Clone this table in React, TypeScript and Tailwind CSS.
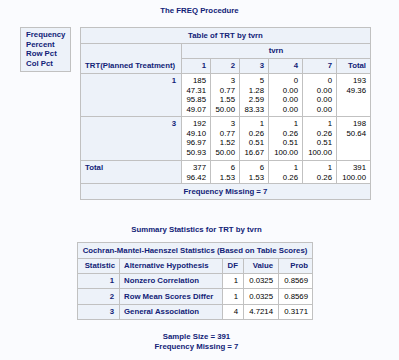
import { Fragment } from "react";

const hdr = "bg-[#edf2f9] text-[#112277] font-bold";
const cell = "bg-white text-black";

const rows = [
  {
    label: "1",
    cols: [
      ["185", "47.31", "95.85", "49.07"],
      ["3", "0.77", "1.55", "50.00"],
      ["5", "1.28", "2.59", "83.33"],
      ["0", "0.00", "0.00", "0.00"],
      ["0", "0.00", "0.00", "0.00"],
      ["193", "49.36"],
    ],
  },
  {
    label: "3",
    cols: [
      ["192", "49.10", "96.97", "50.93"],
      ["3", "0.77", "1.52", "50.00"],
      ["1", "0.26", "0.51", "16.67"],
      ["1", "0.26", "0.51", "100.00"],
      ["1", "0.26", "0.51", "100.00"],
      ["198", "50.64"],
    ],
  },
  {
    label: "Total",
    cols: [
      ["377", "96.42"],
      ["6", "1.53"],
      ["6", "1.53"],
      ["1", "0.26"],
      ["1", "0.26"],
      ["391", "100.00"],
    ],
  },
];

const cmh = [
  ["1", "Nonzero Correlation", "1", "0.0325", "0.8569"],
  ["2", "Row Mean Scores Differ", "1", "0.0325", "0.8569"],
  ["3", "General Association", "4", "4.7214", "0.3171"],
];

export default function App() {
  return (
    <div
      className="w-[399px] h-[360px] bg-[#fafbfe] text-[7.8px] leading-[10px] overflow-hidden"
      style={{ fontFamily: '"Liberation Sans", Arial, sans-serif' }}
    >
      <div className="pt-[6px] text-center font-bold text-[#112277]">The FREQ Procedure</div>

      <div className="mt-[11px] ml-[20px] flex items-start gap-[9px]">
        <div className="w-[51px] h-[45px] border border-[#c1c1c1] bg-[#edf2f9] text-[#112277] font-bold pl-[5px] pt-[2px] leading-[9.6px]">
          <div>Frequency</div>
          <div>Percent</div>
          <div>Row Pct</div>
          <div>Col Pct</div>
        </div>

        <div className="grid w-max grid-cols-[100px_28px_28px_28px_33px_33px_33px] grid-rows-[15px_14px_14px_42px_43px_22px_15px] gap-px bg-[#c1c1c1] p-px">
          <div className={`${hdr} col-span-7 flex items-center justify-center`}>Table of TRT by tvrn</div>
          <div className={`${hdr} row-span-2 flex items-end pl-[4px] pb-[2px]`}>TRT(Planned Treatment)</div>
          <div className={`${hdr} col-span-6 flex items-center justify-center`}>tvrn</div>
          {["1", "2", "3", "4", "7", "Total"].map((h) => (
            <div key={h} className={`${hdr} flex items-center justify-end pr-[4px]`}>
              {h}
            </div>
          ))}
          {rows.map((r) => (
            <Fragment key={r.label}>
              <div className={`${hdr} pt-[2px] ${r.label === "Total" ? "pl-[4px]" : "text-right pr-[5px]"}`}>
                {r.label}
              </div>
              {r.cols.map((c, i) => (
                <div key={i} className={`${cell} text-right pr-[4px] pt-[2px] leading-[9.5px]`}>
                  {c.map((v, j) => (
                    <div key={j}>{v}</div>
                  ))}
                </div>
              ))}
            </Fragment>
          ))}
          <div className={`${hdr} col-span-7 flex items-center justify-center`}>Frequency Missing = 7</div>
        </div>
      </div>

      <div className="mt-[25px] text-center font-bold text-[#112277] pr-[6px]">Summary Statistics for TRT by tvrn</div>

      <div className="mt-[7px] ml-[77px] grid w-max grid-cols-[41px_102px_20px_34px_33px] grid-rows-[15px_14px_14px_15px_14px] gap-px bg-[#c1c1c1] p-px">
        <div className={`${hdr} col-span-5 flex items-center justify-center`}>
          Cochran-Mantel-Haenszel Statistics (Based on Table Scores)
        </div>
        <div className={`${hdr} flex items-center justify-end pr-[4px]`}>Statistic</div>
        <div className={`${hdr} flex items-center pl-[4px]`}>Alternative Hypothesis</div>
        <div className={`${hdr} flex items-center justify-end pr-[5px]`}>DF</div>
        <div className={`${hdr} flex items-center justify-end pr-[5px]`}>Value</div>
        <div className={`${hdr} flex items-center justify-end pr-[4px]`}>Prob</div>
        {cmh.map((r) => (
          <Fragment key={r[0]}>
            <div className={`${hdr} flex items-center justify-end pr-[5px]`}>{r[0]}</div>
            <div className={`${hdr} flex items-center pl-[4px]`}>{r[1]}</div>
            <div className={`${cell} flex items-center justify-end pr-[5px]`}>{r[2]}</div>
            <div className={`${cell} flex items-center justify-end pr-[5px]`}>{r[3]}</div>
            <div className={`${cell} flex items-center justify-end pr-[4px]`}>{r[4]}</div>
          </Fragment>
        ))}
      </div>

      <div className="mt-[12px] text-center font-bold text-[#112277] leading-[9.5px] pr-[6px]">
        <div>Sample Size = 391</div>
        <div>Frequency Missing = 7</div>
      </div>
    </div>
  );
}
